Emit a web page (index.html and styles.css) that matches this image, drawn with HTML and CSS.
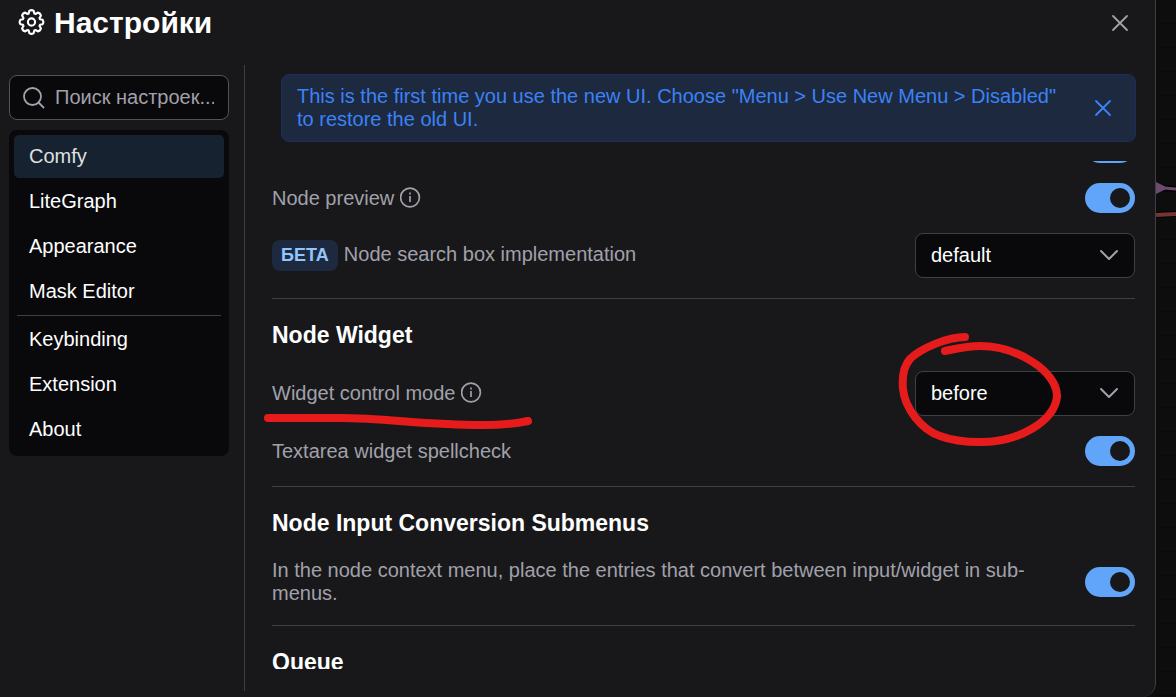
FILE: index.html
```html
<!DOCTYPE html>
<html lang="ru">
    <head>
        <title>Настройки</title>
        <meta charset="UTF-8">
        <meta name="viewport" content="width=device-width, initial-scale=1.0">
        <link rel="stylesheet" href="styles.css">
    </head>
    <body>
        <div class="dialog">
            <header class="dialog-header">
                <svg class="cog" width="27" height="28" viewBox="-13.5 -13 27 28" fill="none" stroke="currentColor" stroke-width="2.1" stroke-linejoin="round">
                    <path d="M-2.2-11.1Q0-12.6 2.2-11.1L2.8-8.5L4-8L6.3-9.4Q8.9-8.9 9.4-6.3L8-4L8.5-2.8L11.1-2.2Q12.6 0 11.1 2.2L8.5 2.8L8 4L9.4 6.3Q8.9 8.9 6.3 9.4L4 8L2.8 8.5L2.2 11.1Q0 12.6-2.2 11.1L-2.8 8.5L-4 8L-6.3 9.4Q-8.9 8.9-9.4 6.3L-8 4L-8.5 2.8L-11.1 2.2Q-12.6 0-11.1-2.2L-8.5-2.8L-8-4L-9.4-6.3Q-8.9-8.9-6.3-9.4L-4-8L-2.8-8.5Z"/>
                    <circle r="3.6"/>
                </svg>
                <h1 class="dialog-title">Настройки</h1>
                <button class="close-btn" aria-label="Закрыть">
                    <svg width="18" height="18" viewBox="0 0 18 18" fill="none" stroke="currentColor" stroke-width="1.8" stroke-linecap="round"><path d="M2 2L16 16M16 2L2 16"/></svg>
                </button>
            </header>
            <div class="dialog-body">
                <aside class="sidebar">
                    <div class="search">
                        <svg class="search-icon" width="24" height="24" viewBox="0 0 24 24" fill="none" stroke="currentColor" stroke-width="1.8" stroke-linecap="round"><circle cx="10.5" cy="10.5" r="8.5"/><path d="M16.5 16.5L21.5 21.5"/></svg>
                        <input type="text" class="search-input" placeholder="Поиск настроек..." aria-label="Поиск настроек">
                    </div>
                    <nav class="menu">
                        <button class="menu-item active">Comfy</button>
                        <button class="menu-item">LiteGraph</button>
                        <button class="menu-item">Appearance</button>
                        <button class="menu-item">Mask Editor</button>
                        <hr class="menu-divider">
                        <button class="menu-item">Keybinding</button>
                        <button class="menu-item">Extension</button>
                        <button class="menu-item">About</button>
                    </nav>
                </aside>
                <main class="panel">
                    <div class="message">
                        <p class="message-text">This is the first time you use the new UI. Choose "Menu &gt; Use New Menu &gt; Disabled" to restore the old UI.</p>
                        <button class="message-close" aria-label="Close">
                            <svg width="18" height="18" viewBox="0 0 18 18" fill="none" stroke="currentColor" stroke-width="1.8" stroke-linecap="round"><path d="M2 2L16 16M16 2L2 16"/></svg>
                        </button>
                    </div>
                    <div class="settings">
                        <div class="settings-list">
                            <div class="row">
                                <input type="checkbox" class="toggle" aria-label="Node suggestions" checked>
                            </div>
                            <div class="row">
                                <label class="label" for="preview">Node preview
                                    <svg class="info" width="21" height="21" viewBox="0 0 21 21" fill="none" stroke="currentColor" stroke-width="1.7"><circle cx="10" cy="10.5" r="9.4"/><path d="M10 9V15M10 5.5V7.5"/></svg>
                                </label>
                                <input type="checkbox" class="toggle" id="preview" checked>
                            </div>
                            <div class="row">
                                <label class="label" for="searchbox"><span class="tag">БЕТА</span>Node search box implementation</label>
                                <div class="select">
                                    <select id="searchbox"><option>default</option></select>
                                    <svg class="chevron" width="20" height="12" viewBox="0 0 20 12" fill="none" stroke="currentColor" stroke-width="2" stroke-linecap="round" stroke-linejoin="round"><path d="M2 2L10 10L18 2"/></svg>
                                </div>
                            </div>
                            <hr class="divider">
                            <h3 class="group-title">Node Widget</h3>
                            <div class="row">
                                <label class="label" for="mode">Widget control mode
                                    <svg class="info" width="21" height="21" viewBox="0 0 21 21" fill="none" stroke="currentColor" stroke-width="1.7"><circle cx="10" cy="10.5" r="9.4"/><path d="M10 9V15M10 5.5V7.5"/></svg>
                                </label>
                                <div class="select">
                                    <select id="mode"><option>before</option></select>
                                    <svg class="chevron" width="20" height="12" viewBox="0 0 20 12" fill="none" stroke="currentColor" stroke-width="2" stroke-linecap="round" stroke-linejoin="round"><path d="M2 2L10 10L18 2"/></svg>
                                </div>
                            </div>
                            <div class="row">
                                <label class="label" for="spellcheck">Textarea widget spellcheck</label>
                                <input type="checkbox" class="toggle" id="spellcheck" checked>
                            </div>
                            <hr class="divider">
                            <h3 class="group-title">Node Input Conversion Submenus</h3>
                            <div class="row">
                                <label class="label" for="submenus">In the node context menu, place the entries that convert between input/widget in sub-menus.</label>
                                <input type="checkbox" class="toggle" id="submenus" checked>
                            </div>
                            <hr class="divider">
                            <h3 class="group-title">Queue</h3>
                        </div>
                    </div>
                </main>
            </div>
        </div>
        <div class="canvas">
            <svg width="20" height="40" viewBox="0 0 20 40" fill="none">
                <path d="M8 8L20 9" stroke="#000" stroke-width="6"/>
                <path d="M0 35L20 34" stroke="#000" stroke-width="6"/>
                <path d="M8 8L20 9" stroke="#6e4a6e" stroke-width="3"/>
                <path d="M0 2L10 7V9L0 14Z" fill="#6e4a6e"/>
                <path d="M0 35L20 34" stroke="#773434" stroke-width="4"/>
            </svg>
        </div>
        <!-- hand drawn marks -->
        <svg class="marks" width="1176" height="697" viewBox="0 0 1176 697" fill="none" stroke="#e61c1c" stroke-width="8" stroke-linecap="round" stroke-linejoin="round">
            <path d="M268 418H340C385 418 425 425 482 425C500 425 515 424 528 421"/>
            <path d="M965 337C948 337 921 348 910 359C903 367 902 378 903 389C905 409 922 430 940 436C953 441 968 442 980 442C1020 442 1054 421 1057 397C1058 371 1016 346 980 346C967 346 955 349 945 351"/>
        </svg>
    </body>
</html>
```
FILE: styles.css
```css
*{
    box-sizing: border-box;
}
body{
    margin: 0;
    height: 100vh;
    display: flex;
    overflow: hidden;
    position: relative;
    background-color: #0d0d0d;
    color: white;
    font-family: "Liberation Sans", Arial, sans-serif;
    font-size: 20px;
    line-height: 23px;
}
button, input, select{
    font: inherit;
    color: inherit;
}
button{
    border: none;
    background: none;
    padding: 0;
    cursor: pointer;
}
svg{
    display: block;
}
.dialog{
    flex: 1;
    min-width: 0;
    display: flex;
    flex-direction: column;
    background-color: #18181b;
    border-right: 1px solid #3f3f46;
    border-bottom-right-radius: 14px;
}
.dialog-header{
    display: flex;
    align-items: center;
    gap: 9px;
    padding: 5px 17px 24px 18px;
}
.dialog-title{
    flex: 1;
    margin: 0;
    font-size: 30px;
    line-height: 36px;
}
.close-btn{
    width: 36px;
    height: 36px;
    display: grid;
    place-items: center;
    color: #a1a1aa;
}
.dialog-body{
    flex: 1;
    min-height: 0;
    display: flex;
    padding-bottom: 6px;
}
.sidebar{
    width: 244px;
    flex-shrink: 0;
    padding: 10px 15px 0 9px;
}
.search{
    position: relative;
    color: #a1a1aa;
}
.search-icon{
    position: absolute;
    left: 13px;
    top: 11px;
}
.search-input{
    display: block;
    width: 100%;
    height: 45px;
    padding: 0 14px 0 45px;
    background-color: #09090b;
    border: 1px solid #52525b;
    border-radius: 8px;
}
.search-input::placeholder{
    color: #a1a1aa;
}
.menu{
    display: flex;
    flex-direction: column;
    gap: 2px;
    margin-top: 10px;
    padding: 5px;
    background-color: #09090b;
    border-radius: 8px;
}
.menu-item{
    height: 43px;
    padding: 0 15px;
    text-align: left;
    border-radius: 5px;
}
.menu-item.active{
    background-color: #172231;
    color: #dfe0e2;
}
.menu-divider{
    width: calc(100% - 6px);
    height: 1px;
    margin: 0 auto;
    border: none;
    background-color: #3f3f46;
}
.panel{
    flex: 1;
    min-width: 0;
    display: flex;
    flex-direction: column;
    border-left: 1px solid #3f3f46;
    padding: 9px 19px 22px 27px;
}
.message{
    display: flex;
    align-items: center;
    gap: 15px;
    margin-left: 9px;
    padding: 10px 9px 10px 15px;
    background-color: #1d293f;
    border: 1px solid #1b2c60;
    border-radius: 8px;
    color: #3b82f6;
}
.message-text{
    flex: 1;
    margin: 0;
}
.message-close{
    width: 46px;
    height: 36px;
    display: grid;
    place-items: center;
    color: #3b82f6;
}
.settings{
    flex: 1;
    min-height: 0;
    margin-top: 19px;
    padding-right: 1px;
    overflow: hidden;
}
/* list is scrolled down a bit */
.settings-list{
    margin-top: -28px;
}
.row{
    display: flex;
    align-items: center;
    gap: 20px;
    margin-bottom: 20px;
}
.label{
    flex: 1;
    color: #a1a1aa;
}
.info{
    display: inline-block;
    vertical-align: -3px;
}
.tag{
    display: inline-block;
    margin-right: 6px;
    padding: 4px 9px;
    background-color: #1d293f;
    border-radius: 8px;
    color: #93c5fd;
    font-size: 18px;
    font-weight: bold;
}
.toggle{
    appearance: none;
    flex-shrink: 0;
    width: 50px;
    height: 30px;
    margin: 0 0 0 auto;
    padding: 5px;
    border-radius: 15px;
    background-color: #3f3f46;
}
.toggle::before{
    content: "";
    display: block;
    width: 20px;
    height: 20px;
    border-radius: 50%;
    background-color: #18181b;
}
.toggle:checked{
    background-color: #60a5fa;
}
.toggle:checked::before{
    margin-left: auto;
}
.select{
    position: relative;
    width: 220px;
}
.select select{
    appearance: none;
    display: block;
    width: 100%;
    height: 45px;
    padding: 0 50px 0 15px;
    background-color: #09090b;
    border: 1px solid #3f3f46;
    border-radius: 8px;
}
.chevron{
    position: absolute;
    right: 16px;
    top: 16px;
    color: #a1a1aa;
    pointer-events: none;
}
.divider{
    height: 1px;
    margin: 0 0 22px;
    border: none;
    background-color: #3f3f46;
}
.group-title{
    margin: 0 0 22px;
    font-size: 23px;
    line-height: 28px;
}
.canvas{
    width: 20px;
    padding-top: 180px;
    background: repeating-linear-gradient(#0d0d0d 0 23px, #0a0a0a 23px 24px);
}
.marks{
    position: absolute;
    left: 0;
    top: 0;
    pointer-events: none;
}
```
